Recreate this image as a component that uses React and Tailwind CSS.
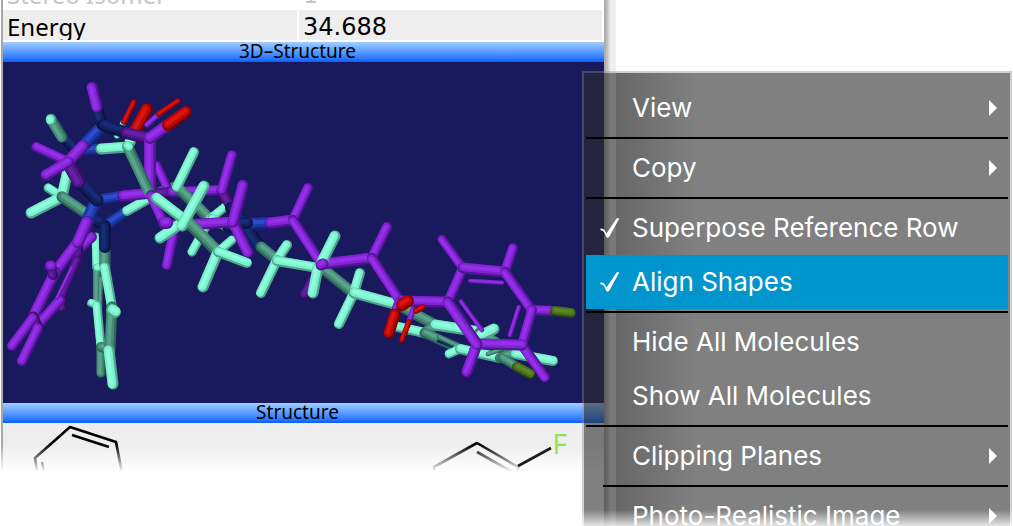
import React from "react";

const PALETTE = {
  p: ["#521594", "#8222d2", "#9430ea"],
  q: ["#350d64", "#51168c", "#6420a4"],
  g: ["#4fa48a", "#7cf0cc", "#8cffdc"],
  h: ["#2e6556", "#468a75", "#58a48d"],
  b: ["#14267c", "#1e38a8", "#2c4cca"],
  n: ["#0a1546", "#11215f", "#182b78"],
  r: ["#7a0000", "#bc0606", "#dc160e"],
  o: ["#2e4612", "#49721e", "#5c882a"],
};

// Each bond: colour key, x1, y1, x2, y2, thickness
const BONDS = [
  // green molecule, far side
  ["g", 62, 197, 48, 188, 8],
  ["n", 78, 151, 69, 168, 9],
  ["g", 68, 170, 62, 197, 10],
  ["n", 64, 138, 77, 151, 10],
  ["h", 51, 119, 62, 137, 10],
  ["g", 51, 119, 51, 120, 9],
  ["g", 62, 197, 31, 213, 10],
  ["n", 86, 213, 105, 226, 11],
  ["h", 62, 197, 84, 212, 10],
  ["b", 78, 150, 101, 149, 10],
  ["g", 101, 149, 128, 147, 10],
  ["g", 117, 136, 123, 123, 5],
  ["r", 124, 122, 134, 102, 5],
  ["g", 128, 147, 135, 130, 10],
  ["r", 136, 129, 147, 109, 11],
  ["h", 150, 197, 177, 187, 11],
  ["p", 157, 165, 167, 187, 8],
  ["q", 152, 194, 180, 192, 10],
  ["p", 172, 192, 222, 190, 9],
  ["h", 177, 187, 210, 219, 10],
  ["g", 177, 187, 194, 152, 9],
  ["g", 210, 219, 225, 207, 8],
  ["g", 210, 219, 192, 252, 8],
  ["g", 212, 219, 228, 227, 9],
  ["n", 228, 227, 245, 225, 10],
  ["q", 222, 190, 232, 208, 10],
  ["p", 222, 190, 232, 155, 9],
  ["n", 231, 208, 245, 224, 11],
  // phenyl rings on the left
  ["b", 105, 226, 127, 211, 10],
  ["g", 127, 211, 150, 198, 9],
  ["g", 97, 268, 96, 237, 8],
  ["h", 97, 268, 97, 305, 7],
  ["g", 97, 305, 91, 303, 7],
  ["h", 101, 278, 100, 308, 4],
  ["g", 97, 305, 101, 347, 8],
  ["g", 105, 266, 97, 268, 7],
  ["h", 101, 347, 101, 373, 8],
  ["h", 105, 247, 105, 266, 10],
  ["n", 105, 226, 105, 247, 11],
  ["h", 101, 347, 110, 350, 9],
  ["g", 105, 267, 112, 307, 9],
  ["h", 112, 307, 110, 350, 10],
  ["g", 112, 310, 115, 312, 11],
  ["g", 109, 350, 113, 384, 10],
  ["p", 78, 250, 92, 237, 9],
  ["q", 78, 242, 77, 260, 10],
  ["q", 77, 260, 60, 300, 8],
  ["q", 60, 300, 62, 307, 8],
  ["p", 60, 300, 39, 324, 9],
  ["p", 72, 267, 57, 298, 3],
  ["p", 78, 242, 55, 272, 10],
  ["p", 55, 272, 33, 317, 10],
  ["q", 33, 317, 38, 328, 10],
  ["q", 53, 275, 51, 267, 9],
  ["p", 50, 266, 51, 266, 10],
  ["p", 33, 318, 12, 346, 9],
  ["p", 38, 328, 22, 361, 9],
  ["b", 97, 200, 87, 222, 12],
  ["p", 87, 222, 78, 242, 11],
  // purple molecule, upper left
  ["b", 97, 200, 123, 196, 10],
  ["p", 123, 196, 152, 193, 10],
  ["n", 80, 182, 97, 200, 12],
  ["q", 68, 162, 79, 181, 13],
  ["p", 36, 147, 68, 162, 9],
  ["b", 102, 126, 83, 146, 11],
  ["p", 83, 146, 68, 162, 11],
  ["p", 68, 162, 46, 175, 10],
  ["n", 97, 108, 102, 124, 11],
  ["p", 92, 87, 97, 107, 10],
  ["n", 103, 125, 124, 132, 11],
  ["q", 126, 133, 150, 139, 11],
  ["p", 147, 125, 158, 115, 5],
  ["r", 159, 114, 178, 101, 5],
  ["p", 150, 138, 150, 193, 11],
  ["p", 150, 138, 168, 125, 11],
  ["r", 168, 125, 186, 112, 11],
  ["h", 128, 147, 150, 194, 10],
  ["g", 127, 146, 128, 147, 9],
  // centre
  ["p", 175, 226, 167, 265, 9],
  ["p", 151, 195, 164, 223, 9],
  ["p", 170, 226, 233, 222, 10],
  ["g", 186, 220, 160, 238, 10],
  ["g", 156, 198, 186, 221, 10],
  ["h", 186, 220, 218, 252, 11],
  ["g", 182, 226, 204, 186, 10],
  ["p", 164, 223, 167, 223, 11],
  ["g", 218, 252, 232, 240, 8],
  ["g", 218, 252, 203, 287, 10],
  ["g", 218, 252, 247, 263, 9],
  ["n", 245, 225, 260, 247, 11],
  ["h", 261, 247, 277, 260, 10],
  ["b", 245, 224, 270, 223, 11],
  ["n", 236, 223, 247, 223, 11],
  ["p", 233, 222, 248, 252, 10],
  ["p", 233, 222, 243, 185, 10],
  ["p", 270, 223, 293, 220, 10],
  ["g", 277, 260, 287, 245, 9],
  ["g", 277, 260, 261, 293, 9],
  ["g", 277, 261, 318, 268, 9],
  ["q", 322, 264, 305, 294, 9],
  ["p", 293, 220, 308, 188, 9],
  ["p", 293, 220, 322, 264, 9],
  ["h", 322, 268, 353, 293, 10],
  ["p", 322, 264, 372, 258, 10],
  ["g", 320, 266, 335, 236, 10],
  ["g", 318, 268, 313, 293, 10],
  ["p", 321, 265, 323, 264, 10],
  ["g", 354, 293, 360, 273, 9],
  ["g", 354, 293, 339, 324, 9],
  ["g", 354, 293, 398, 305, 10],
  ["p", 372, 258, 387, 227, 9],
  ["p", 372, 258, 401, 302, 9],
  // green fluorophenyl
  ["h", 400, 306, 435, 325, 10],
  ["g", 398, 327, 425, 333, 9],
  ["h", 435, 325, 425, 333, 10],
  ["g", 435, 325, 480, 332, 10],
  ["h", 480, 332, 513, 353, 9],
  ["h", 425, 333, 460, 349, 9],
  ["n", 438, 341, 458, 349, 2],
  ["h", 439, 337, 463, 349, 4],
  ["g", 460, 349, 449, 354, 8],
  ["g", 460, 349, 500, 358, 9],
  ["h", 488, 354, 508, 347, 4],
  ["h", 500, 358, 513, 353, 9],
  ["g", 480, 336, 494, 329, 10],
  ["g", 515, 354, 553, 361, 9],
  ["h", 502, 358, 517, 367, 8],
  ["o", 517, 367, 530, 374, 9],
  // purple fluorophenyl
  ["p", 401, 301, 448, 302, 10],
  ["p", 463, 268, 442, 239, 8],
  ["p", 505, 272, 513, 248, 9],
  ["p", 448, 302, 463, 268, 9],
  ["p", 463, 268, 505, 272, 10],
  ["p", 505, 272, 532, 310, 9],
  ["p", 532, 310, 554, 311, 9],
  ["o", 555, 311, 571, 313, 9],
  ["p", 532, 310, 522, 345, 9],
  ["p", 522, 345, 545, 377, 9],
  ["p", 477, 344, 467, 372, 10],
  ["p", 477, 344, 522, 345, 10],
  ["p", 448, 302, 477, 344, 10],
  ["p", 470, 281, 502, 283, 4],
  ["p", 519, 307, 510, 335, 4],
  ["p", 461, 301, 482, 330, 4],
  // carbonyl oxygens
  ["p", 399, 303, 395, 314, 9],
  ["r", 395, 314, 389, 333, 10],
  ["r", 402, 305, 408, 301, 11],
  ["p", 413, 310, 409, 322, 5],
  ["r", 409, 322, 402, 340, 5],
  ["r", 416, 311, 423, 307, 5],
];

function Bond({ bond }) {
  const [key, x1, y1, x2, y2, size] = bond;
  const w = size > 5 ? size + 1 : size + 0.5;
  const [dark, mid, light] = PALETTE[key];
  const len = Math.hypot(x2 - x1, y2 - y1) || 1;
  let nx = (y2 - y1) / len;
  let ny = -(x2 - x1) / len;
  if (nx + ny * 1.3 > 0) {
    nx = -nx;
    ny = -ny;
  }
  const layer = (color, width, shift) => (
    <line
      x1={x1 + nx * shift}
      y1={y1 + ny * shift}
      x2={x2 + nx * shift}
      y2={y2 + ny * shift}
      stroke={color}
      strokeWidth={width}
      strokeLinecap="round"
    />
  );
  return (
    <g>
      {layer(dark, w, 0)}
      {layer(mid, w * 0.78, w * 0.09)}
      {layer(light, w * 0.36, w * 0.12)}
    </g>
  );
}

function Molecule3D() {
  return (
    <svg
      viewBox="3 62 601 341"
      className="block h-[341px] w-full bg-[#19195e]"
      role="img"
      aria-label="3D-Structure"
    >
      {BONDS.map((bond, i) => (
        <Bond key={i} bond={bond} />
      ))}
    </svg>
  );
}

function Structure2D() {
  return (
    <svg
      viewBox="3 423 601 52"
      className="block h-[52px] w-full"
      role="img"
      aria-label="Structure"
    >
      <g fill="none" stroke="#000" strokeWidth="2.6" strokeLinejoin="round">
        <path d="M38 478 L35 458 L70 427 L116 442 L123 478" />
        <path d="M72 435 L109 447" />
        <path d="M42 462 L45 478" />
        <path d="M434 478 V467 L477 443 L518 467 V478" />
        <path d="M477 452 L512 472" />
      </g>
    </svg>
  );
}

function TitleBar({ children }) {
  return (
    <h2 className="flex h-5 justify-center bg-linear-to-b from-[#9fcdff] to-[#0560ff] pr-3 text-[19px] leading-[18px] text-black">
      {children}
    </h2>
  );
}

function Check() {
  return (
    <svg viewBox="0 0 20 20" className="h-5 w-5" aria-hidden="true">
      <path
        d="M0.5 10.5 C3 10 5 12 6.5 15.5 L16.8 0.3 H19.4 L9.4 18.6 Q7.8 20.6 6.2 18.8 C5 15.5 3.6 12 0.5 12.2 Z"
        fill="#fff"
      />
    </svg>
  );
}

function MenuItem({ label, checked, submenu, active }) {
  return (
    <button
      type="button"
      role={checked ? "menuitemcheckbox" : "menuitem"}
      aria-checked={checked ? true : undefined}
      className={
        "flex h-[54px] w-full items-center pl-[14px] pr-[11px] text-left " +
        (active ? "bg-[#0095cc]" : "")
      }
    >
      <span className="w-8 shrink-0">{checked && <Check />}</span>
      <span className="flex-1 whitespace-nowrap">{label}</span>
      {submenu && (
        <svg viewBox="0 0 8 16" className="h-4 w-2" aria-hidden="true">
          <path d="M0 0 L8 8 L0 16 Z" fill="#fff" />
        </svg>
      )}
    </button>
  );
}

function Separator({ inset }) {
  return (
    <div
      role="separator"
      className={"my-[2px] h-[2px] bg-black " + (inset ? "ml-[17px]" : "")}
    />
  );
}

export default function App() {
  return (
    <main className="relative flex h-screen overflow-hidden bg-white font-['Noto_Sans','Open_Sans',sans-serif] text-black">
      <section className="relative w-[calc(100%-409px)] shrink-0 pl-px">
        <div className="border-l-2 border-[#a8a8a8]">
          <table className="block w-full text-2xl leading-[34px]">
            <tbody className="block">
              <tr className="flex h-2 items-end gap-[2px] overflow-hidden pr-[2px] text-[#c6c6c6]">
                <th className="h-[30px] w-[294px] pl-1 text-left font-normal">Stereo Isomer</th>
                <td className="h-[30px] flex-1 pl-1 font-['DejaVu_Sans',sans-serif]">1</td>
              </tr>
              <tr className="mt-[2px] mb-[2px] flex h-[30px] gap-[2px] overflow-hidden pr-[2px]">
                <th className="w-[294px] bg-[#eeeeee] pl-1 text-left font-normal">Energy</th>
                <td className="flex-1 bg-[#eeeeee] pl-1 font-['DejaVu_Sans',sans-serif]">34.688</td>
              </tr>
            </tbody>
          </table>
          <TitleBar>3D–Structure</TitleBar>
          <Molecule3D />
          <TitleBar>Structure</TitleBar>
          <div className="bg-[#eeeeee]">
            <Structure2D />
          </div>
        </div>
        <div className="absolute inset-x-0 top-[445px] h-[30px] bg-linear-to-b from-white/0 to-white to-90%" />
        <svg
          viewBox="0 0 36 22"
          className="absolute right-[52px] top-[446px] h-[22px] w-9"
          aria-hidden="true"
        >
          <path d="M2 20 L35 2" fill="none" stroke="#1a1a1a" strokeWidth="2.6" />
        </svg>
        <span className="absolute right-[37px] top-[424px] text-[28px] leading-[38px] text-[#8fe64c]">F</span>
      </section>

      <div className="flex w-3 shrink-0">
        <div className="w-[2px] bg-[#acacac]" />
        <div className="w-[2px] bg-[#c2c2c2]" />
        <div className="w-[2px] bg-[#d8d8d8]" />
        <div className="flex-1 bg-[#eeeeee]" />
      </div>

      <nav
        role="menu"
        aria-label="Context menu"
        className="absolute right-px top-[71px] w-[430px] border-2 border-[#8c8c8c]/40 bg-[#2c2c2c]/60 bg-clip-padding px-[2px] pt-2 font-['Inter',sans-serif] text-[26px] leading-8 text-white"
      >
        <div className="absolute inset-y-0 left-8 w-20 bg-linear-to-r from-black/20 to-black/0" />
        <div className="relative">
          <MenuItem label="View" submenu />
          <Separator />
          <MenuItem label="Copy" submenu />
          <Separator />
          <MenuItem label="Superpose Reference Row" checked />
          <MenuItem label="Align Shapes" checked active />
          <Separator />
          <MenuItem label="Hide All Molecules" />
          <MenuItem label="Show All Molecules" />
          <Separator />
          <MenuItem label="Clipping Planes" submenu />
          <Separator inset />
          <MenuItem label="Photo-Realistic Image" submenu />
        </div>
      </nav>
      <div className="absolute inset-x-0 bottom-0 h-4 bg-linear-to-b from-white/0 to-white/80" />
    </main>
  );
}
